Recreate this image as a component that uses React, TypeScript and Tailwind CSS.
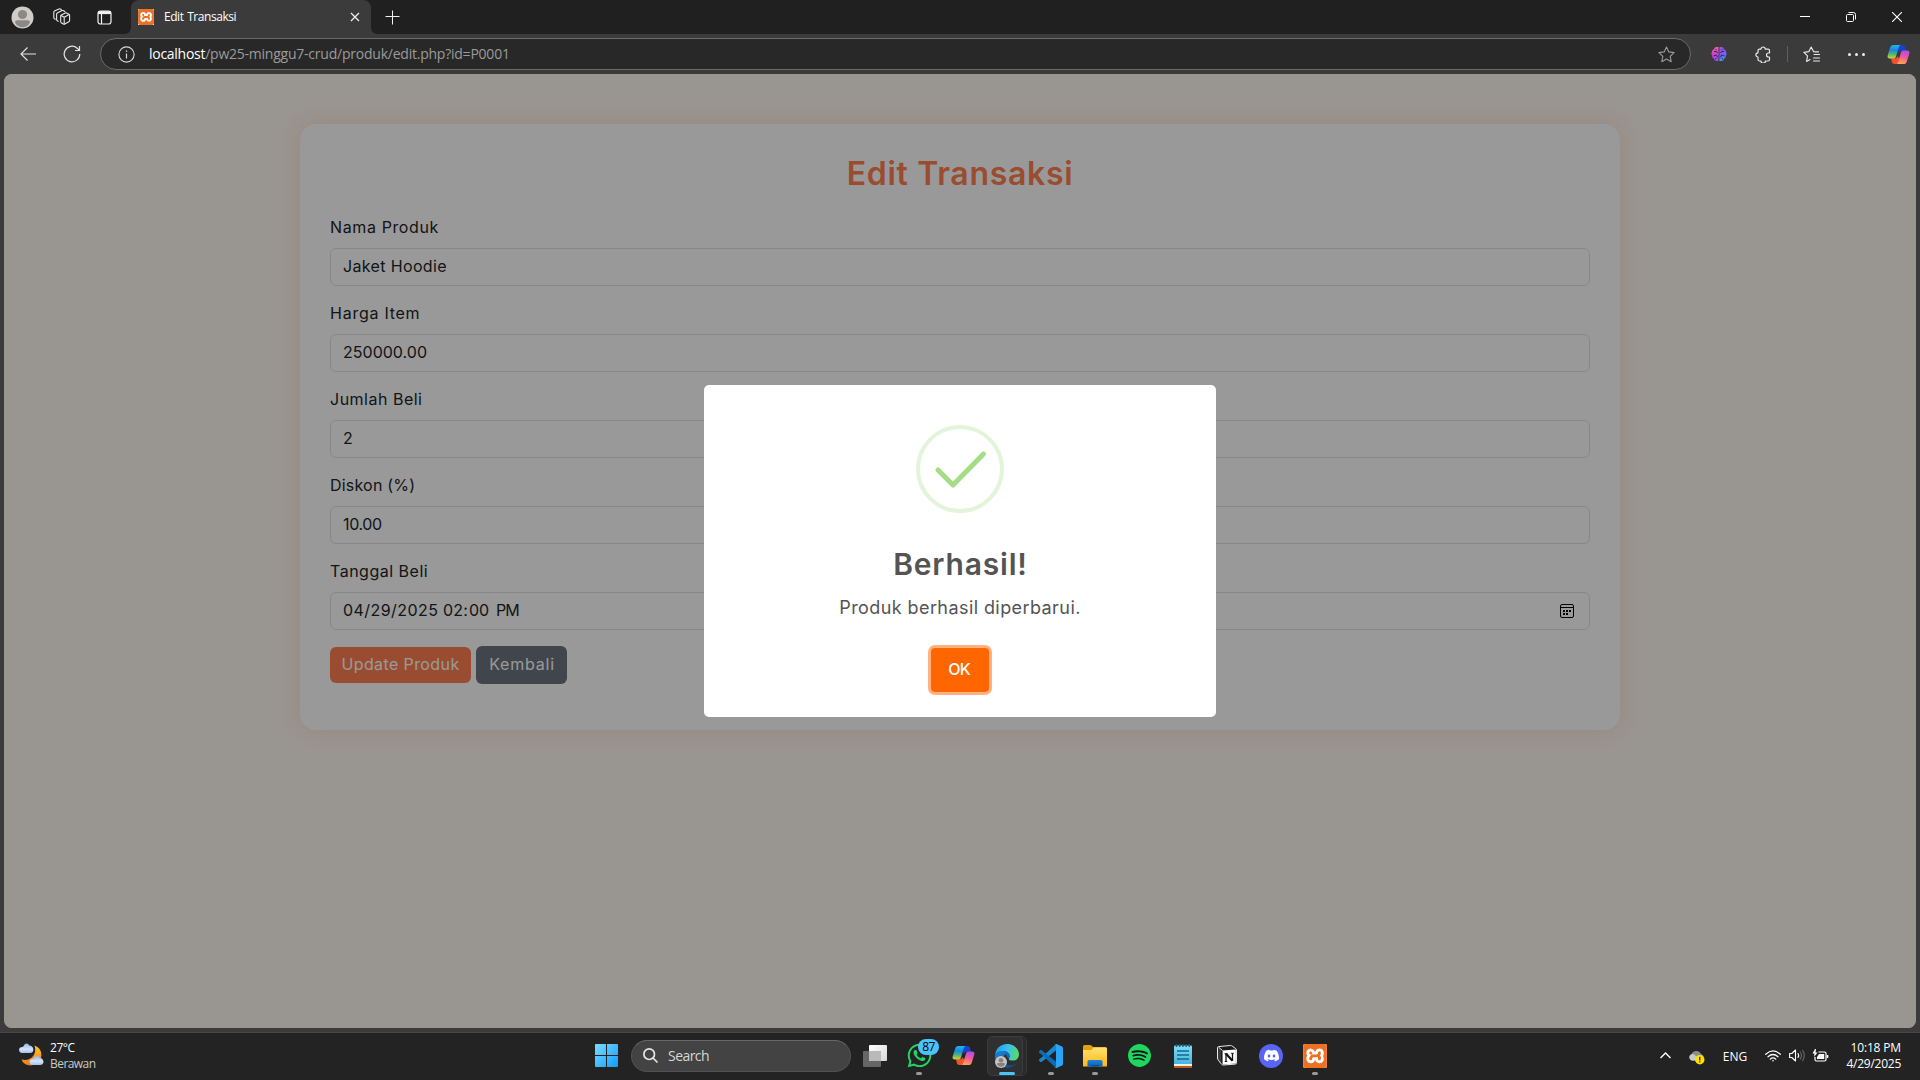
import type { ReactNode } from "react";
import { FaWhatsapp } from "react-icons/fa";
import { SiDiscord, SiSpotify, SiXampp } from "react-icons/si";

function Copilot({ size }: { size: number }) {
  return (
    <svg width={size} height={size} viewBox="0 0 24 24" fill="none">
      <defs>
        <linearGradient id="cpA" x1="6" y1="2" x2="5" y2="17" gradientUnits="userSpaceOnUse">
          <stop offset="0" stopColor="#1bb8f5" />
          <stop offset=".35" stopColor="#1c86e0" />
          <stop offset=".65" stopColor="#4fb872" />
          <stop offset="1" stopColor="#f8d51c" />
        </linearGradient>
        <linearGradient id="cpB" x1="19" y1="7" x2="15" y2="22" gradientUnits="userSpaceOnUse">
          <stop offset="0" stopColor="#a44df0" />
          <stop offset=".5" stopColor="#f0569a" />
          <stop offset="1" stopColor="#ffa74a" />
        </linearGradient>
      </defs>
      <path d="M13 2h3.200c1.300 0 2.300.8 2.700 2.100L19.900 8H16c-1.600 0-2.700.9-3.200 2.400L11 7z" fill="#1743c9" />
      <path d="M11 22H7.600c-1.300 0-2.200-.8-2.600-2.100L4.200 16H8c1.500 0 2.600-.9 3.100-2.400L13 17z" fill="#f0512e" />
      <path d="M6.800 2h7.900c-1.200.1-1.900.9-2.300 2.200L9.400 14c-.5 1.500-1.400 2.200-2.800 2.200H3c-2 0-2.800-1.300-2.300-3.100L3.400 4.500C3.900 2.900 5.100 2 6.800 2z" fill="url(#cpA)" />
      <path d="M17.200 22H9.300c1.200-.1 1.900-.9 2.300-2.200L14.600 10c.5-1.500 1.400-2.200 2.800-2.200H21c2 0 2.800 1.300 2.300 3.100l-2.700 8.600c-.5 1.600-1.700 2.500-3.400 2.500z" fill="url(#cpB)" />
    </svg>
  );
}

function Workspaces() {
  return (
    <svg width="18" height="18" viewBox="0 0 18 18" fill="none" stroke="#e8e8e8" strokeWidth="1.100" strokeLinejoin="round" strokeLinecap="round">
      <path d="M8 7.300l4.200-2.200q.8-.4 1.500 0l2.100 1.100q.8.400.8 1.300v5q0 .9-.8 1.300l-4 2.300q-.7.300-1.300 0l-2-1.100q-.8-.4-.8-1.300V8.300q0-.7.300-1z" />
      <path d="M8 7.500l3.200 1.700 4.900-2.700M11.200 9.200v6.700" />
      <path d="M5.200 13.300l-.9-.5q-.7-.4-.7-1.200V6.300q0-.8.7-1.200L9 2.600q.7-.3 1.300 0l1.500.8" />
      <path d="M2.300 11.200l-.8-.4q-.7-.4-.7-1.200V4.300q0-.8.7-1.200L6 .9q.7-.3 1.300 0l1 .5" />
    </svg>
  );
}

function TitleBar() {
  return (
    <div className="flex h-[34px] shrink-0 items-start bg-[#202020]">
      <div className="flex h-[34px] w-[131px] items-center pl-[11px]">
        <svg width="23" height="23" viewBox="0 0 23 23">
          <circle cx="11.500" cy="11.500" r="11" fill="#d0cdc9" />
          <circle cx="11.500" cy="8.500" r="4.600" fill="#8c8985" />
          <path d="M4 16.300q0-2.100 2.200-2.100h10.600q2.200 0 2.200 2.100c-1.300 3.300-4.200 5-7.500 5s-6.200-1.700-7.500-5z" fill="#8c8985" />
        </svg>
        <span className="ml-[19px]"><Workspaces /></span>
        <svg className="ml-[26px]" width="15" height="15" viewBox="0 0 15 15" fill="none" stroke="#f2f2f2">
          <rect x="1" y="1" width="13" height="13" rx="2.500" strokeWidth="1.200" />
          <path d="M1 2.600h13" strokeWidth="3" />
          <path d="M4.500 4v10" strokeWidth="1.200" />
        </svg>
      </div>
      <div className="relative flex h-[34px] w-[240px] items-center rounded-t-[8px] bg-[#3b3b3b] pl-[7px]">
        <svg className="absolute bottom-0 -left-[7px]" width="7" height="7" viewBox="0 0 7 7"><path d="M7 0v7H0q7 0 7-7z" fill="#3b3b3b" /></svg>
        <svg className="absolute -right-[7px] bottom-0" width="7" height="7" viewBox="0 0 7 7"><path d="M0 0v7h7Q0 7 0 0z" fill="#3b3b3b" /></svg>
        <span className="flex size-4 items-center justify-center bg-white"><SiXampp size={16} color="#ee7023" /></span>
        <span className="ml-[10px] flex-1 text-[12px] tracking-[-0.45px] [word-spacing:1px] whitespace-nowrap text-white">Edit Transaksi</span>
        <svg className="mr-[11px]" width="10" height="10" viewBox="0 0 10 10" stroke="#eee" strokeWidth="1.300"><path d="M1 1l8 8M9 1L1 9" /></svg>
      </div>
      <svg className="mt-[10px] ml-[14px]" width="15" height="15" viewBox="0 0 15 15" stroke="#f2f2f2" strokeWidth="1"><path d="M7.500 .5v14M.5 6.500h14" /></svg>
      <div className="ml-auto flex h-[34px] items-center gap-[36px] pr-[18px]">
        <svg width="10" height="10" viewBox="0 0 10 10" stroke="#fff"><path d="M0 4.500h10" /></svg>
        <svg width="10" height="10" viewBox="0 0 10 10" fill="none" stroke="#fff">
          <rect x=".5" y="2.500" width="7" height="7" rx="1" />
          <path d="M2.500 .5h5q2 0 2 2v5" />
        </svg>
        <svg width="10" height="10" viewBox="0 0 10 10" stroke="#fff" strokeWidth="1.100"><path d="M0 0l10 10M10 0L0 10" /></svg>
      </div>
    </div>
  );
}

function Toolbar() {
  return (
    <div className="flex h-[40px] shrink-0 items-center bg-[#3b3b3b]">
      <svg className="ml-[20px]" width="16" height="14" viewBox="0 0 16 14" fill="none" stroke="#e4e4e4" strokeWidth="1.100"><path d="M16 7H1M7.500 .5L1 7l6.500 6.500" /></svg>
      <svg className="ml-[27px]" width="18" height="18" viewBox="0 0 18 18" fill="none" stroke="#e4e4e4" strokeWidth="1.200"><path d="M16.800 9A7.800 7.800 0 1 1 14.200 3.200L16 5M16.500 1v4.500h-4.500" /></svg>
      <div className="ml-[19px] flex h-[32px] w-[1591px] items-center rounded-full border border-[#6b6b6b] bg-[#282828] pl-[17px]">
        <svg width="17" height="17" viewBox="0 0 17 17" fill="none" stroke="#d8d8d8">
          <circle cx="8.500" cy="8.500" r="7.600" strokeWidth="1.100" />
          <path d="M8.500 7.500v5" strokeWidth="1.200" /><path d="M8.500 4.500v1.300" strokeWidth="1.300" />
        </svg>
        <span className="ml-[14px] flex-1 text-[14px] leading-5 whitespace-nowrap">
          <span className="tracking-[-0.28px] text-white">localhost</span><span className="tracking-[-0.23px] text-[#9b9b9b]">/pw25-minggu7-crud/produk/edit.php?id=P0001</span>
        </span>
        <svg className="mr-[15px]" width="17" height="17" viewBox="0 0 17 17" fill="none" stroke="#9a9a9a" strokeWidth="1.100" strokeLinejoin="round"><path d="M8.500 1l2.300 4.900 5.300.7-3.900 3.700 1 5.400-4.700-2.600-4.700 2.600 1-5.400L.9 6.600l5.300-.7z" /></svg>
      </div>
      <svg className="ml-[20px]" width="16" height="16" viewBox="0 0 16 16" fill="none">
        <defs>
          <linearGradient id="brL" x1="3" y1="1" x2="6" y2="15" gradientUnits="userSpaceOnUse"><stop offset="0" stopColor="#f76c8c" /><stop offset=".4" stopColor="#dd3ed2" /><stop offset="1" stopColor="#8a55f4" /></linearGradient>
          <linearGradient id="brR" x1="9" y1="1" x2="13" y2="15" gradientUnits="userSpaceOnUse"><stop offset="0" stopColor="#a94bea" /><stop offset=".5" stopColor="#7a5cf8" /><stop offset="1" stopColor="#35a5f5" /></linearGradient>
        </defs>
        <path d="M7.500 1v14H5.600Q3.300 15 3 12.800.8 12 1.300 9.800-.3 8 1 6.100.8 3.900 2.900 3.200 3.600 1 5.600 1z" fill="url(#brL)" />
        <path d="M8.500 1v14h1.900q2.300 0 2.600-2.200 2.200-.8 1.700-3 1.600-1.800.3-3.700.2-2.200-1.900-2.900Q12.400 1 10.400 1z" fill="url(#brR)" />
        <path d="M3 5.500h2.500l1 1.500M2.500 10l3-1 1 2.500M13 5.500h-2.500L9.500 7M13.500 10l-3-1-1 2.500M4.500 3l1 1M11.500 3l-1 1M4.500 13.500l.5-1.500M11.500 13.500L11 12" stroke="#33284a" strokeWidth="1" />
      </svg>
      <svg className="ml-[28px]" width="17" height="17" viewBox="0 0 17 17" fill="none" stroke="#e8e8e8" strokeWidth="1.200" strokeLinejoin="round"><path d="M6 3.100a2.100 2.100 0 0 1 4.200 0H13q1.500 0 1.500 1.500V7h-1a2 2 0 0 0 0 4h1v2.500q0 1.500-1.500 1.500h-2.600a2.100 2.100 0 0 1-4.400 0H4.500Q3 15 3 13.500V11a2.100 2.100 0 0 1 0-4.200V4.600q0-1.500 1.500-1.500z" /></svg>
      <span className="ml-[15px] h-4 w-px bg-[#606060]" />
      <svg className="ml-[15px]" width="17" height="17" viewBox="0 0 17 17" fill="none" stroke="#e8e8e8" strokeWidth="1.150" strokeLinejoin="round" strokeLinecap="round"><path d="M12.500 5.900l-2-.3L8.200 1 5.900 5.600.9 6.400l3.600 3.500-.9 5.500 3.400-1.900M11 8.500h5.500M10.500 12h6M10.500 15h6M8.200 1l2.300 4.600 5 .3" /></svg>
      <span className="ml-[28px] flex gap-[4px]"><i className="size-[3px] rounded-full bg-[#eee]" /><i className="size-[3px] rounded-full bg-[#eee]" /><i className="size-[3px] rounded-full bg-[#eee]" /></span>
      <span className="ml-auto pr-[10px]"><Copilot size={23} /></span>
    </div>
  );
}

const inputBox = "flex h-[38px] items-center rounded-[6px] border border-[#dee2e6] pb-[2px] pl-[12px]";

function Field({ label, children }: { label: ReactNode; children: ReactNode }) {
  return (
    <div className="mb-4 flex flex-col gap-2">
      <div className="h-6 leading-[22px]">{label}</div>
      <div className={inputBox}>{children}</div>
    </div>
  );
}

function FormCard() {
  return (
    <div className="mx-auto mt-[50px] h-[606px] w-[1320px] rounded-[16px] bg-white p-[30px] font-['Inter','Liberation_Sans',sans-serif] text-[16px] text-[#212529] shadow-[0_0_20px_rgba(255,127,80,0.17)]">
      <h1 className="mb-6 h-[38px] text-center text-[32px] leading-[40px] font-semibold tracking-[0.7px] text-[#ff7f50]">Edit Transaksi</h1>
      <Field label={<span className="tracking-[0.62px]">Nama Produk</span>}><span className="tracking-[0.35px]">Jaket Hoodie</span></Field>
      <Field label={<span className="tracking-[0.75px]">Harga Item</span>}><span className="tracking-[0.02px]">250000.00</span></Field>
      <Field label={<span className="tracking-[0.5px]">Jumlah Beli</span>}>2</Field>
      <Field label={<span className="tracking-[0.2px]">Diskon (%)</span>}><span className="tracking-[-0.35px]">10.00</span></Field>
      <Field label={<span className="tracking-[0.5px]">Tanggal Beli</span>}>
        <span className="w-[100px] tracking-[0.45px]">04/29/2025</span>
        <span className="w-[26px] tracking-[0.2px]">02:</span>
        <span className="w-[27px]">00</span>
        <span className="flex-1 tracking-[-1px]">PM</span>
        <svg className="mt-[2px] mr-[15px]" width="14" height="14" viewBox="0 0 14 14" fill="none" stroke="#000">
          <rect x=".5" y=".5" width="13" height="13" rx="1.500" />
          <path d="M0 3.500h14" />
          <path d="M3 7h2M6 7h2M9 7h2M3 10h2M6 10h2" strokeWidth="2" />
        </svg>
      </Field>
      <div className="flex items-center gap-[5px] text-white">
        <button className="h-[36px] w-[141px] rounded-[6px] bg-[#ff7f50] pb-[2px] text-[16px] tracking-[0.4px]">Update Produk</button>
        <button className="h-[38px] w-[91px] rounded-[6px] bg-[#6c757d] pb-[2px] pl-px text-[16px] tracking-[0.8px]">Kembali</button>
      </div>
    </div>
  );
}

function SuccessDialog() {
  return (
    <div className="flex h-[332px] w-[512px] flex-col items-center rounded-[5px] bg-white font-['Inter','Liberation_Sans',sans-serif]">
      <svg className="mt-[40px] shrink-0" width="88" height="88" viewBox="0 0 88 88" fill="none">
        <circle cx="44" cy="44" r="42" stroke="#e4f4da" strokeWidth="4" />
        <path d="M22 45l15 15L67.500 29" stroke="#a5dc86" strokeWidth="5" strokeLinecap="round" strokeLinejoin="round" />
      </svg>
      <h2 className="mt-[31px] h-[40px] pl-px text-[30px] leading-[40px] font-semibold tracking-[0.8px] text-[#545454]">Berhasil!</h2>
      <p className="mt-[8px] h-[30px] text-[18px] leading-[32px] tracking-[0.42px] text-[#545454]">Produk berhasil diperbarui.</p>
      <button className="mt-[26px] h-[44px] w-[58px] rounded-[4px] bg-[#ff6600] pr-[2px] pb-[2px] text-[16px] font-medium tracking-[-1px] text-white shadow-[0_0_0_3px_rgba(255,102,0,0.5)]">OK</button>
    </div>
  );
}

function TaskItem({ children, dot }: { children: ReactNode; dot?: boolean }) {
  return (
    <div className="relative flex h-[46px] w-[44px] items-center justify-center">
      {children}
      {dot && <i className="absolute bottom-[4px] left-[19px] h-[3px] w-[6px] rounded-full bg-[#9a9a9a]" />}
    </div>
  );
}

function Taskbar() {
  return (
    <div className="flex h-[48px] shrink-0 items-center border-t border-[#484848] bg-[#232323] pb-[2px] text-[12px] text-white">
      <div className="flex w-[594px] items-center pl-[19px]">
        <svg className="-mt-[2px]" width="25" height="24" viewBox="0 0 25 24">
          <defs>
            <linearGradient id="moon" x1="0" y1="0" x2="0" y2="1"><stop offset="0" stopColor="#fbc52c" /><stop offset="1" stopColor="#f07a1c" /></linearGradient>
            <linearGradient id="cloud" x1="0" y1="0" x2="0" y2="1"><stop offset="0" stopColor="#8fb4ee" /><stop offset=".6" stopColor="#d5e4fb" /><stop offset="1" stopColor="#a3c0f0" /></linearGradient>
          </defs>
          <path d="M15.500 2.500c5.500 2 8 7 6.500 12-1.800 6-8 9-13.500 7.500-3-.8-5-2.700-6-5.500 5 1.300 9.500-.3 12-4 2-3 2.200-6.500 1-10z" fill="url(#moon)" />
          <path d="M3 10a3 3 0 0 1 .3-6q1.200-.3 1.500-1.300Q5.600.500 7.500.500t2.800 2q3.300.2 4 3.600.4 3.900-3.500 3.900z" fill="url(#cloud)" />
          <path d="M13.500 22a3 3 0 0 1 .3-6q.8-.3 1.200-1.300.9-2 2.800-2 1.900 0 2.600 2 3.300.3 4 3.500.3 3.800-3.500 3.800z" fill="url(#cloud)" />
        </svg>
        <div className="ml-[6px] leading-4">
          <div className="tracking-[-0.45px]">27°C</div>
          <div className="tracking-[-0.55px] text-[#c9c9c9]">Berawan</div>
        </div>
      </div>
      <svg className="ml-[1px]" width="23" height="23" viewBox="0 0 23 23">
        <defs><linearGradient id="win" gradientUnits="userSpaceOnUse" x1="0" y1="0" x2="23" y2="23"><stop offset="0" stopColor="#7bdcff" /><stop offset="1" stopColor="#0f9bff" /></linearGradient></defs>
        <path d="M1 0h10v11H0V1q0-1 1-1zM12 0h10q1 0 1 1v10H12zM0 12h11v11H1q-1 0-1-1zM12 12h11v10q0 1-1 1H12z" fill="url(#win)" />
      </svg>
      <div className="ml-[13px] flex h-[32px] w-[220px] items-center rounded-full border border-[#505050] border-t-[#686868] bg-[#434343] pl-[11px]">
        <svg width="15" height="15" viewBox="0 0 15 15" fill="none" stroke="#e6e6e6" strokeWidth="1.700" strokeLinecap="round"><circle cx="6.200" cy="6.200" r="5.300" /><path d="M10 10l4 4" /></svg>
        <span className="ml-[10px] text-[14px] tracking-[-0.55px] text-[#d6d6d6]">Search</span>
      </div>
      <div className="ml-[2px] flex">
        <TaskItem>
          <svg width="24" height="22" viewBox="0 0 24 22">
            <defs><linearGradient id="tv" x1="0" y1="0" x2="1" y2="1"><stop offset="0" stopColor="#fff" /><stop offset="1" stopColor="#d8d8d8" /></linearGradient></defs>
            <rect x="0" y="6" width="18" height="16" rx="1" fill="#666" />
            <rect x="6" y="0" width="18" height="16" rx="1" fill="url(#tv)" />
            <path d="M6 6h12v10H6z" fill="#b9b9b9" />
          </svg>
        </TaskItem>
        <TaskItem dot>
          <FaWhatsapp size={27} color="#25d366" />
          <span className="absolute top-[6px] left-[21px] flex h-[16px] w-[21px] items-center justify-center rounded-full bg-[#4cc2ff] text-[12px] tracking-[-0.6px] text-black">87</span>
        </TaskItem>
        <TaskItem><Copilot size={23} /></TaskItem>
        <div className="relative flex h-[46px] w-[44px] items-center justify-center">
          <span className="absolute top-[3px] left-[5px] h-[40px] w-[37px] rounded-[5px] border border-[#383838] bg-[#2a2a2a]" />
          <span className="absolute top-[3px] left-[2px] h-[40px] w-[36px] rounded-[5px] border border-[#3c3c3c] bg-[#303030]" />
          <svg className="relative" width="24" height="24" viewBox="0 0 24 24">
            <defs>
              <linearGradient id="edT" x1="0" y1="6" x2="24" y2="10" gradientUnits="userSpaceOnUse"><stop offset="0" stopColor="#1c9de8" /><stop offset=".5" stopColor="#35c1f1" /><stop offset="1" stopColor="#5fdc5a" /></linearGradient>
              <linearGradient id="edB" x1="4" y1="8" x2="14" y2="24" gradientUnits="userSpaceOnUse"><stop offset="0" stopColor="#1b7fd6" /><stop offset="1" stopColor="#114a8b" /></linearGradient>
            </defs>
            <path d="M0 11.500C.4 5 5.300 0 12 0c6.900 0 12 4.800 12 10.300 0 3.800-2.700 6.300-6.200 6.300-2.700 0-4.200-.9-4-1.800.2-.7.800-1 .8-2.700C14.600 9.200 11.800 7 8.300 7 4 7 .8 9 0 11.500z" fill="url(#edT)" />
            <path d="M0 12c.6-2.900 3.800-5 7.500-5 3.900 0 7 2.200 7 5.200 0 1.500-.7 1.900-.8 2.600C12.500 13.500 11 12 11.200 9.900 9.200 10.800 8 12.600 8 14.900c0 4.300 4 6.700 8.300 6.400 2.500-.2 4.300-1 5.700-2.200C20 22 16.500 24 12.500 24 5.500 24-.2 18.500 0 12z" fill="url(#edB)" />
            <circle cx="6" cy="18" r="6" fill="#c6c3c0" />
            <circle cx="6" cy="16.300" r="2.400" fill="#85827f" />
            <path d="M2 20.300q0-1.200 1.200-1.200h5.600q1.200 0 1.200 1.200Q8.800 22.800 6 22.800t-4-2.500z" fill="#85827f" />
          </svg>
          <i className="absolute bottom-[4px] left-[14px] h-[3px] w-[16px] rounded-full bg-[#4cc2ff]" />
        </div>
        <TaskItem dot>
          <svg width="24" height="24" viewBox="0 0 24 24">
            <path d="M17 0L2.500 13.600 0 15.600q-.3.800.3 1.400l1 .9q.6.400 1.200 0L17.500 6z" fill="#1b86d0" />
            <path d="M17 24L2.500 10.400 0 8.400Q-.3 7.600.3 7l1-.9q.6-.4 1.200 0L17.500 18z" fill="#0d6bb5" />
            <path d="M17.500 0L23 2.500q1 .5 1 1.500v16q0 1-1 1.500L17.500 24q-1 .2-1.300-.5l1.300-1.200V1.700L16.200.5q.3-.7 1.300-.5z" fill="#2aa5f3" />
            <path d="M17 0h1v24h-1z" fill="#2aa5f3" />
          </svg>
        </TaskItem>
        <TaskItem dot>
          <svg width="24" height="22" viewBox="0 0 24 22">
            <defs>
              <linearGradient id="fo" x1="0" y1="0" x2="0" y2="1"><stop offset="0" stopColor="#ffe16e" /><stop offset="1" stopColor="#fdb819" /></linearGradient>
              <linearGradient id="fb" x1="0" y1="0" x2="0" y2="1"><stop offset="0" stopColor="#1f86dd" /><stop offset="1" stopColor="#0b5fb0" /></linearGradient>
            </defs>
            <path d="M0 6V1.500Q0 0 1.500 0H7q1 0 1.700.7L10 2h12.500Q24 2 24 3.500V6z" fill="#e3a013" />
            <path d="M0 5h8.500l2-2.500h12Q24 2.500 24 4v17q0 .5-.5.5h-23q-.5 0-.5-.5z" fill="url(#fo)" />
            <path d="M4.500 21.500v-5q0-1.500 1.500-1.500h12q1.500 0 1.500 1.500v5z" fill="url(#fb)" />
            <path d="M8 21.500V20h8v1.500z" fill="#0a4f96" />
          </svg>
        </TaskItem>
        <TaskItem><span className="flex size-[23px] rounded-full bg-[#10130f]"><SiSpotify size={23} color="#1ed760" /></span></TaskItem>
        <TaskItem>
          <svg width="18" height="24" viewBox="0 0 18 24">
            <defs><linearGradient id="np" x1="0" y1="0" x2="0" y2="1"><stop offset="0" stopColor="#7fdcf5" /><stop offset="1" stopColor="#47b5dc" /></linearGradient></defs>
            <path d="M0 20h18v4H0z" fill="#b85a18" />
            <path d="M0 19.500h18V22H0z" fill="#f1efec" />
            <path d="M0 2.500Q0 1.500 1 1.500h16q1 0 1 1V20H0z" fill="url(#np)" />
            <path d="M2.500 0v3M5.700 0v3M8.900 0v3M12.100 0v3M15.300 0v3" stroke="#155a80" strokeWidth="1.400" />
            <path d="M3 7h12M3 11h12M3 15h12" stroke="#12688f" strokeWidth="1.600" />
          </svg>
        </TaskItem>
        <TaskItem>
          <svg width="20" height="21" viewBox="0 0 20 21">
            <path d="M1.500 1.600L13.500.5q.9 0 1.600.5l3.700 2.700q.7.600.7 1.300v12.800q0 1.200-1.300 1.300l-12 .9q-1 0-1.600-.7l-3.200-4Q.5 14.200.5 13V2.800q0-1.100 1-1.200z" fill="#1c1c1c" stroke="#e8e8e8" strokeWidth="1" />
            <path d="M1.200 2.300L4 4.800v14.300L1 15z" fill="#fff" opacity=".15" />
            <path d="M5.600 5.500l13.300-.9v14l-13.300.9z" fill="#fff" />
            <path d="M1.500 2.200l4.100 3.300" stroke="#e8e8e8" />
            <path d="M9 8.800v7.500M15.500 8.300v7.500" stroke="#111" strokeWidth="1.300" />
            <path d="M9 8.800l6.500 7" stroke="#111" strokeWidth="2.200" />
            <path d="M7.500 8.700h3M7.700 16.500h2.600M14 8.300h2.800" stroke="#111" strokeWidth=".9" />
          </svg>
        </TaskItem>
        <TaskItem><span className="flex size-6 items-center justify-center rounded-full bg-[#5865f2]"><SiDiscord size={15} color="#fff" /></span></TaskItem>
        <TaskItem dot><span className="flex size-6 items-center justify-center rounded-[2px] bg-white"><SiXampp size={24} color="#ee7023" /></span></TaskItem>
      </div>
      <div className="ml-auto flex items-center">
        <svg width="11" height="7" viewBox="0 0 11 7" fill="none" stroke="#fff" strokeWidth="1.400"><path d="M.5 6L5.500 1l5 5" /></svg>
        <svg className="ml-[17px] mt-[4px]" width="17" height="15" viewBox="0 0 17 15">
          <path d="M3.500 10.500a3.400 3.400 0 0 1 0-6.300Q5 1 8.300 1t4.700 3q2.500.5 3 3.500L8 10.500z" fill="#8e8e8e" />
          <path d="M3.500 10.500a3.400 3.400 0 0 1 .5-6.500q2-.2 3.300 1.500L11 8v2.500z" fill="#c9c9c9" />
          <circle cx="11.800" cy="9.700" r="4.700" fill="#ffe000" />
          <path d="M11.800 6.800v3.600M11.800 11.300v1.200" stroke="#222" strokeWidth="1.200" />
        </svg>
        <span className="mt-[2px] ml-[18px] tracking-[0.1px]">ENG</span>
        <svg className="ml-[18px]" width="16" height="12" viewBox="0 0 16 12" fill="none" stroke="#fff" strokeWidth="1.200" strokeLinecap="round">
          <path d="M.7 4.300q7.300-6.800 14.600 0M3 6.800q5-4.600 10 0M5.200 9.200q2.800-2.500 5.600 0" />
          <circle cx="8" cy="10.700" r=".8" fill="#fff" stroke="none" />
        </svg>
        <svg className="ml-[8px]" width="17" height="13" viewBox="0 0 17 13" fill="none" stroke="#fff" strokeWidth="1.100" strokeLinejoin="round" strokeLinecap="round">
          <path d="M.6 4.500h2.200L6.500 1v11L2.800 8.500H.6z" />
          <path d="M9 4.500q1.300 2 0 4" />
          <path d="M11.300 3q2.300 3.500 0 7M13.600 1.300q3.300 5.200 0 10.400" stroke="#6a6a6a" />
        </svg>
        <svg className="ml-[6px]" width="17" height="14" viewBox="0 0 17 14" fill="none" stroke="#fff" strokeWidth="1.200">
          <path d="M6.500 3h6q1.500 0 1.500 1.500v6q0 1.500-1.500 1.500h-8Q3 12 3 10.500V8" />
          <path d="M15.500 6v3" strokeWidth="1.600" />
          <path d="M7 5h5.200v5H5V8z" fill="#fff" stroke="none" />
          <path d="M3 0L.5 4.500h2L2 8l3.500-4.500h-2L4 0z" fill="#fff" stroke="none" />
        </svg>
        <div className="ml-[17px] pr-[19px] text-right leading-4">
          <div className="tracking-[-0.15px]">10:18 PM</div>
          <div className="tracking-[-0.25px]">4/29/2025</div>
        </div>
      </div>
    </div>
  );
}

export default function App() {
  return (
    <div className="flex h-[1080px] w-[1920px] flex-col overflow-hidden bg-[#3b3b3b] font-['Open_Sans','Noto_Sans',sans-serif]">
      <TitleBar />
      <Toolbar />
      <div className="relative mx-1 mb-1 h-[954px] shrink-0 overflow-hidden rounded-[8px] bg-[#fff8f0]">
        <div className="flow-root">
          <FormCard />
        </div>
        <div className="absolute inset-0 flex items-center justify-center bg-black/40">
          <SuccessDialog />
        </div>
      </div>
      <Taskbar />
    </div>
  );
}
